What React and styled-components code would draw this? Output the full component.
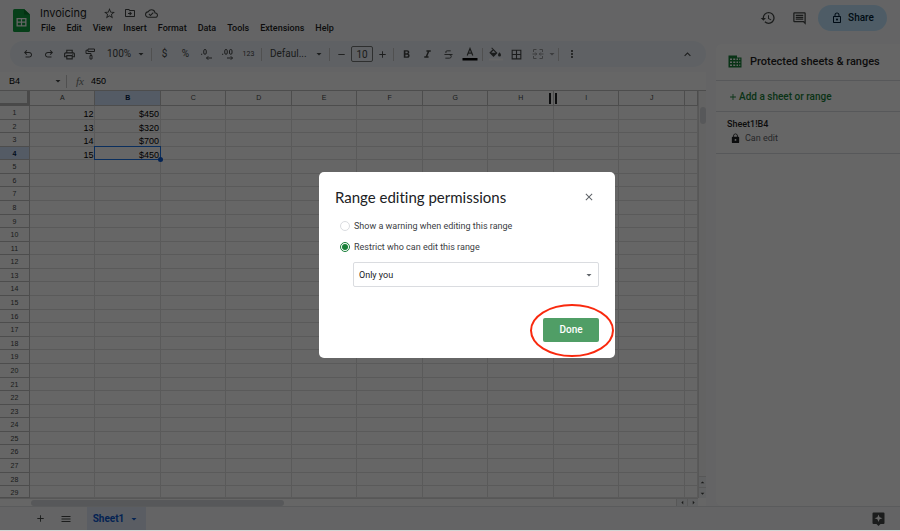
import React from "react";
import styled, { createGlobalStyle, css } from "styled-components";
import {
  MdStarBorder, MdOutlineDriveFileMove, MdOutlineCloudDone, MdOutlinePrint,
  MdFormatBold, MdFormatItalic, MdBorderAll, MdMoreVert, MdKeyboardArrowUp,
  MdHistory, MdOutlineInsertComment, MdOutlineLock, MdLock, MdAdd, MdRemove,
  MdMenu, MdArrowDropDown, MdArrowDropUp, MdArrowLeft, MdArrowRight, MdClose,
} from "react-icons/md";
import { Strikethrough } from "lucide-react";

const SANS = 'Roboto, "Liberation Sans", sans-serif';
const CELL = '"Liberation Sans", Arial, sans-serif';

const GlobalStyle = createGlobalStyle`
  * { box-sizing: border-box; }
  html, body { margin: 0; background: #d4d4d4; }
  body { font-family: ${SANS}; color: #1f1f1f; overflow: hidden; }
  button, input, select { font: inherit; color: inherit; margin: 0; padding: 0; border: 0; background: none; }
  h1, h2, p { margin: 0; }
  svg { display: block; flex: none; }
`;

const Shell = styled.div`
  height: calc(100vh - 1px);
  display: flex;
  flex-direction: column;
  background: #f9fbfd;
`;

/* ---------- Header ---------- */
const Header = styled.header`
  display: flex;
  height: 41px;
  padding: 5px 13px 0 13px;
`;
const Logo = styled.a`
  padding-top: 4px;
  margin-right: 10px;
`;
const Titles = styled.div`
  flex: 1;
`;
const TitleRow = styled.div`
  display: flex;
  align-items: center;
  height: 16px;
  color: #444746;
`;
const DocTitle = styled.h1`
  font: 400 11px/16px Inter, ${SANS};
  color: #1f1f1f;
  margin-right: 12px;
`;
const IconButton = styled.button`
  display: flex;
  align-items: center;
  justify-content: center;
  width: ${(p) => p.$w || 21}px;
  height: ${(p) => p.$h || 16}px;
  color: ${(p) => p.$color || "#444746"};
`;
const Menu = styled.nav`
  display: flex;
  gap: 11px;
  padding-left: 1px;
`;
const MenuItem = styled.button`
  font: 500 9px/15px ${SANS};
  color: #1f1f1f;
`;
const HeaderActions = styled.div`
  display: flex;
  align-items: center;
  height: 26px;
  gap: 11px;
`;
const ShareButton = styled.button`
  display: flex;
  align-items: center;
  justify-content: center;
  gap: 5px;
  width: 69px;
  height: 26px;
  margin-left: -3px;
  border-radius: 13px;
  background: #c2e7ff;
  color: #001d35;
  font: 500 10px/14px ${SANS};
`;

/* ---------- Body ---------- */
const Body = styled.div`
  flex: 1;
  min-height: 0;
  display: flex;
  gap: 10px;
`;
const Main = styled.main`
  flex: 1;
  min-width: 0;
  display: flex;
  flex-direction: column;
`;
const Toolbar = styled.div`
  display: flex;
  align-items: center;
  height: 26px;
  margin: 0 0 5px 10px;
  padding: 0 8px 0 7px;
  border-radius: 13px;
  background: #edf2fa;
  color: #444746;
`;
const ToolText = styled.button`
  display: flex;
  align-items: center;
  justify-content: center;
  width: ${(p) => p.$w || 21}px;
  height: 20px;
  color: #444746;
  font: 400 ${(p) => p.$size || 10}px/16px ${SANS};
`;
const ToolSelect = styled(ToolText)`
  justify-content: space-between;
  padding: 0 2px 0 6px;
`;
const Divider = styled.span`
  width: 1px;
  height: 13px;
  margin: 0 2px;
  background: #c7c7c7;
`;
const SizeInput = styled.input`
  width: 22px;
  height: 16px;
  border: 1px solid #747775;
  border-radius: 2px;
  text-align: center;
  font: 400 10px/14px ${SANS};
`;
const Spacer = styled.span`
  flex: 1;
`;

const FormulaBar = styled.div`
  display: flex;
  align-items: center;
  height: 18px;
  padding-left: 9px;
  background: #fff;
  color: #444746;
  font: 400 9px/14px ${CELL};
`;
const NameBox = styled.input`
  width: 43px;
  color: #000;
`;
const Fx = styled.span`
  width: 20px;
  padding-left: 7px;
  font: italic 400 11px/14px "Liberation Serif", serif;
  color: #747775;
`;
const FormulaInput = styled.input`
  flex: 1;
  min-width: 0;
  color: #000;
  padding-left: 2px;
`;

/* ---------- Sheet ---------- */
const SheetArea = styled.div`
  flex: 1;
  min-height: 0;
  display: grid;
  grid-template-columns: minmax(0, 1fr) 8px;
  grid-template-rows: minmax(0, 1fr) 8px;
  background: #fff;
  border-top: 1px solid #c0c0c0;
`;
const Sheet = styled.table`
  display: grid;
  min-height: 0;
  grid-template-columns: 30px repeat(10, minmax(0, 5fr)) minmax(0, 1fr);
  grid-template-rows: 15px repeat(28, minmax(0, 8fr)) minmax(0, 7fr);
  font: 400 9px/14px ${CELL};
`;
const Part = styled.tbody`
  display: contents;
`;
const Row = styled.tr`
  display: contents;
`;
const headCell = css`
  position: relative;
  display: flex;
  justify-content: center;
  padding: 0;
  min-height: 0;
  border: 0 solid #c0c0c0;
  border-width: 0 1px 1px 0;
  color: ${(p) => (p.$on ? "#041e49" : "#444746")};
  background: ${(p) => (p.$on ? "#d3e3fd" : "#fff")};
  font-size: 7px;
  font-weight: ${(p) => (p.$on ? 700 : 400)};
`;
const Corner = styled.th`
  padding: 0;
  background: #f8f9fa;
  border: 0 solid #b7b7b7;
  border-width: 0 3px 3px 0;
`;
const ColHead = styled.th`
  ${headCell}
`;
const RowHead = styled.th`
  ${headCell}
`;
const Cell = styled.td`
  position: relative;
  z-index: ${(p) => (p.$active ? 1 : 0)};
  display: flex;
  justify-content: flex-end;
  min-height: 0;
  padding: 1px 1px 0 0;
  border: 0 solid #e1e1e1;
  border-width: 0 1px 1px 0;
  color: #000;
`;
const Selection = styled.span`
  position: absolute;
  inset: -1px;
  border: 1px solid #1a73e8;
  &::after {
    content: "";
    position: absolute;
    right: -3px;
    bottom: -3px;
    width: 5px;
    height: 5px;
    border-radius: 50%;
    background: #0b57d0;
  }
`;
const FreezeHandle = styled.span`
  position: absolute;
  z-index: 1;
  right: -4px;
  top: 2px;
  width: 8px;
  height: 11px;
  border: 0 solid #202124;
  border-width: 0 2px;
`;
const VScroll = styled.div`
  display: flex;
  flex-direction: column;
  align-items: center;
  padding-top: 16px;
  border-left: 1px solid #d9d9d9;
  background: #f8f8f8;
`;
const VThumb = styled.div`
  width: 6px;
  height: 17px;
  border-radius: 3px;
  background: #dadce0;
`;
const HScroll = styled.div`
  display: flex;
  align-items: center;
  border-top: 1px solid #d9d9d9;
  padding-left: 31px;
`;
const HThumb = styled.div`
  width: 38%;
  height: 6px;
  border-radius: 3px;
  background: #dadce0;
`;
const ScrollArrow = styled.button`
  display: flex;
  align-items: center;
  justify-content: center;
  width: ${(p) => (p.$flat ? 11 : 7)}px;
  height: ${(p) => (p.$flat ? 7 : 11)}px;
  background: #f1f3f4;
  border: 0 solid #d9d9d9;
  border-width: ${(p) => (p.$flat ? "0 0 0 1px" : "1px 0 0 0")};
  color: #444746;
`;

/* ---------- Side panel ---------- */
const Panel = styled.aside`
  width: 184px;
  margin-top: 3px;
  border-radius: 6px 0 0 6px;
  background: #fff;
`;
const PanelHeader = styled.div`
  display: flex;
  align-items: center;
  gap: 8px;
  height: 37px;
  padding: 0 0 1px 12px;
  border-bottom: 1px solid #dadce0;
`;
const PanelTitle = styled.h2`
  font: 500 11px/16px ${SANS};
  white-space: nowrap;
`;
const AddRange = styled.button`
  display: flex;
  align-items: center;
  gap: 1px;
  width: 100%;
  height: 31px;
  padding: 1px 0 0 12px;
  border-bottom: 1px solid #dadce0;
  color: #188038;
  font: 500 10px/14px ${SANS};
`;
const RangeEntry = styled.div`
  height: 42px;
  padding: 5px 0 0 11px;
  border-bottom: 1px solid #dadce0;
  font: 500 9px/14px ${SANS};
`;
const RangeNote = styled.p`
  display: flex;
  align-items: center;
  gap: 4px;
  padding-left: 3px;
  font-weight: 400;
  color: #5f6368;
  & > svg { color: #202124; }
`;

/* ---------- Tabs ---------- */
const TabBar = styled.footer`
  display: flex;
  align-items: center;
  height: 24px;
  padding: 0 15px 0 27px;
  border-top: 1px solid #e1e3e6;
  color: #444746;
`;
const SheetTab = styled.button`
  display: flex;
  align-items: center;
  justify-content: center;
  gap: 4px;
  width: 59px;
  height: 23px;
  margin-left: 8px;
  background: #e1e9f7;
  color: #0b57d0;
  font: 700 10px/14px ${SANS};
`;

/* ---------- Dialog ---------- */
const Overlay = styled.div`
  position: fixed;
  z-index: 2;
  inset: 0 0 1px 0;
  display: flex;
  align-items: center;
  justify-content: center;
  padding-left: 34px;
  background: rgba(0, 0, 0, 0.6);
`;
const Dialog = styled.section`
  width: 296px;
  padding: 16px;
  border-radius: 5px;
  background: #fff;
`;
const DialogHeader = styled.div`
  display: flex;
  align-items: center;
  justify-content: space-between;
  height: 18px;
  margin-bottom: 12px;
`;
const DialogTitle = styled.h2`
  font: 400 15px/18px Lato, ${SANS};
  font-variant-ligatures: none;
  color: #202124;
`;
const Choice = styled.label`
  display: flex;
  align-items: center;
  gap: 4px;
  height: 16px;
  margin: 0 0 5px 5px;
  font: 400 9px/14px ${SANS};
  color: #3c4043;
`;
const Radio = styled.input`
  appearance: none;
  display: grid;
  place-items: center;
  width: 10px;
  height: 10px;
  border: 1px solid #dadce0;
  border-radius: 50%;
  &:checked { border-color: #188038; }
  &:checked::after {
    content: "";
    width: 6px;
    height: 6px;
    border-radius: 50%;
    background: #188038;
  }
`;
const SelectWrap = styled.div`
  display: grid;
  align-items: center;
  margin: 7px 0 0 18px;
  & > * { grid-area: 1 / 1; }
  & > svg { justify-self: end; margin-right: 4px; color: #5f6368; pointer-events: none; }
`;
const Select = styled.select`
  appearance: none;
  width: 100%;
  height: 25px;
  padding-left: 5px;
  border: 1px solid #dadce0;
  border-radius: 2px;
  font: 400 9px/14px ${SANS};
  color: #202124;
`;
const DialogActions = styled.div`
  display: flex;
  justify-content: flex-end;
  margin-top: 31px;
`;
const DoneWrap = styled.div`
  position: relative;
`;
const DoneButton = styled.button`
  display: block;
  width: 56px;
  height: 24px;
  border-radius: 2px;
  background: #509e66;
  color: #fff;
  font: 500 10px/14px ${SANS};
`;
const Ring = styled.span`
  position: absolute;
  inset: -14px -15px -15px -13px;
  border: 2px solid #f9290e;
  border-radius: 50%;
  pointer-events: none;
`;

/* ---------- Icons ---------- */
const SheetsLogo = () => (
  <svg width="17" height="23" viewBox="0 0 17 23">
    <path d="M1.6 0H11l6 5.6v15.8q0 1.6-1.6 1.6H1.6Q0 23 0 21.400V1.600Q0 0 1.600 0z" fill="#0f9d3f" />
    <path d="M11 0l6 5.600h-6z" fill="#087a2c" />
    <path d="M3.500 9h10v8.500h-10z M4.800 10.200v2.400h3.100v-2.400z M9.100 10.200v2.400h3.100v-2.400z M4.800 13.800v2.400h3.100v-2.400z M9.100 13.800v2.400h3.100v-2.400z" fill="#fff" fillRule="evenodd" />
  </svg>
);
const UNDO = "M280-200v-80h284q63 0 109.500-40T720-420q0-60-46.500-100T564-560H312l104 104-56 56-200-200 200-200 56 56-104 104h252q97 0 166.500 63T800-420q0 94-69.500 157T564-200H280Z";
const UndoIcon = ({ flip }) => (
  <svg width="12" height="12" viewBox="0 -960 960 960" fill="currentColor">
    <path d={UNDO} transform={flip ? "translate(960 0) scale(-1 1)" : undefined} />
  </svg>
);
const PaintIcon = () => (
  <svg width="11" height="12" viewBox="0 0 22 24" fill="none" stroke="currentColor" strokeWidth="2">
    <path d="M6 2h13v5H6z M6 4.500H2v6.500h10v4" />
    <path d="M10 15h4v7h-4z" />
  </svg>
);
const DecimalIcon = ({ more }) => (
  <svg width="13" height="13" viewBox="0 0 26 26" fill="none" stroke="currentColor" strokeWidth="2">
    <path d="M2 12.500h2.400" strokeWidth="2.400" />
    <rect x="7.500" y="3" width="5" height="9.500" rx="2.500" />
    {more && <rect x="17" y="3" width="5" height="9.500" rx="2.500" />}
    {more ? <path d="M12 20h11 M19.500 16.500l3.500 3.500-3.500 3.500" /> : <path d="M24 20H13 M16.500 16.500L13 20l3.500 3.500" />}
  </svg>
);
const TextColorIcon = () => (
  <svg width="16" height="14" viewBox="0 0 16 14" fill="none">
    <path d="M5.200 8.500L8 1.500l2.800 7 M6.100 6.200h3.800" stroke="currentColor" strokeWidth="1.200" />
    <path d="M.5 11h15v2.500H.5z" fill="#000" />
  </svg>
);
const FillIcon = () => (
  <svg width="16" height="14" viewBox="0 0 16 14">
    <path d="M4 0.500l5.500 5.500-4 4-4.200-4.200 3.500-3.500L3.200 1.300z M5.400 3.600L3.300 5.700h4.300z" fill="currentColor" fillRule="evenodd" />
    <path d="M11.500 5.300q1.500 1.800 1.500 2.700a1.500 1.500 0 0 1-3 0q0-.9 1.500-2.700z" fill="currentColor" />
    <path d="M1 11.500h14v2H1z" fill="#fff" />
  </svg>
);
const MergeIcon = () => (
  <svg width="12" height="12" viewBox="0 0 24 24" fill="none" stroke="#96999b" strokeWidth="2">
    <path d="M9 3H3v5 M15 3h6v5 M9 21H3v-5 M15 21h6v-5 M1 12h8 M23 12h-8 M6.500 9l3 3-3 3 M17.500 9l-3 3 3 3" />
  </svg>
);
const TableIcon = () => (
  <svg width="14" height="13" viewBox="0 0 28 26">
    <path d="M1 1h17v4h9v20H1z" fill="#188038" />
    <path d="M4 7h4v3H4z M10.500 7h4v3h-4z M17 7h3v3h-3z M4 13h4v3H4z M10.500 13h4v3h-4z M17 13h3v3h-3z M22.500 13h2v3h-2z M4 19h4v3H4z M10.500 19h4v3h-4z M17 19h3v3h-3z M22.500 19h2v3h-2z M22.500 7h2v3h-2z" fill="#fff" />
  </svg>
);
const ExploreIcon = () => (
  <svg width="13" height="14" viewBox="0 0 26 28">
    <path d="M3 1h20q2 0 2 2v19q0 2-2 2h-6l-4 4-4-4H3q-2 0-2-2V3q0-2 2-2z" fill="#444746" />
    <path d="M13 5l2.200 5.300L21 12.500l-5.800 2.200L13 20l-2.200-5.300L5 12.500l5.800-2.200z" fill="#fff" />
  </svg>
);

const MENUS = ["File", "Edit", "View", "Insert", "Format", "Data", "Tools", "Extensions", "Help"];
const COLUMNS = ["A", "B", "C", "D", "E", "F", "G", "H", "I", "J", ""];
const DATA = { 1: ["12", "$450"], 2: ["13", "$320"], 3: ["14", "$700"], 4: ["15", "$450"] };
const ROWS = Array.from({ length: 29 }, (_, i) => i + 1);

const Tool = ({ label, children, ...rest }) => (
  <IconButton aria-label={label} $h={20} {...rest}>{children}</IconButton>
);

export default function App() {
  return (
    <>
      <GlobalStyle />
      <Shell>
        <Header>
          <Logo href="#" aria-label="Sheets home"><SheetsLogo /></Logo>
          <Titles>
            <TitleRow>
              <DocTitle>Invoicing</DocTitle>
              <IconButton aria-label="Star"><MdStarBorder size={13} /></IconButton>
              <IconButton aria-label="Move"><MdOutlineDriveFileMove size={12} /></IconButton>
              <IconButton aria-label="Saved status"><MdOutlineCloudDone size={13} /></IconButton>
            </TitleRow>
            <Menu>{MENUS.map((m) => <MenuItem key={m}>{m}</MenuItem>)}</Menu>
          </Titles>
          <HeaderActions>
            <IconButton aria-label="Version history"><MdHistory size={16} /></IconButton>
            <IconButton aria-label="Comments"><MdOutlineInsertComment size={15} /></IconButton>
            <ShareButton><MdOutlineLock size={12} />Share</ShareButton>
          </HeaderActions>
        </Header>

        <Body>
          <Main>
            <Toolbar role="toolbar" aria-label="Formatting">
              <Tool label="Undo"><UndoIcon /></Tool>
              <Tool label="Redo"><UndoIcon flip /></Tool>
              <Tool label="Print"><MdOutlinePrint size={13} /></Tool>
              <Tool label="Paint format"><PaintIcon /></Tool>
              <ToolSelect $w={48}>100%<MdArrowDropDown size={12} /></ToolSelect>
              <Divider />
              <ToolText>$</ToolText>
              <ToolText>%</ToolText>
              <Tool label="Decrease decimal places"><DecimalIcon /></Tool>
              <Tool label="Increase decimal places"><DecimalIcon more /></Tool>
              <ToolText $size={7}>123</ToolText>
              <Divider />
              <ToolSelect $w={63}>Defaul...<MdArrowDropDown size={12} /></ToolSelect>
              <Divider />
              <Tool label="Decrease font size" $w={19}><MdRemove size={11} /></Tool>
              <SizeInput aria-label="Font size" defaultValue="10" />
              <Tool label="Increase font size" $w={18}><MdAdd size={11} /></Tool>
              <Divider />
              <Tool label="Bold"><MdFormatBold size={13} /></Tool>
              <Tool label="Italic"><MdFormatItalic size={13} /></Tool>
              <Tool label="Strikethrough"><Strikethrough size={11} /></Tool>
              <Tool label="Text color"><TextColorIcon /></Tool>
              <Divider />
              <Tool label="Fill color"><FillIcon /></Tool>
              <Tool label="Borders"><MdBorderAll size={13} /></Tool>
              <Tool label="Merge cells"><MergeIcon /></Tool>
              <Tool label="Merge options" $w={8} $color="#96999b"><MdArrowDropDown size={12} /></Tool>
              <Divider />
              <Tool label="More"><MdMoreVert size={12} /></Tool>
              <Spacer />
              <Tool label="Hide the menus"><MdKeyboardArrowUp size={13} /></Tool>
            </Toolbar>

            <FormulaBar>
              <NameBox aria-label="Name box" defaultValue="B4" />
              <MdArrowDropDown size={12} />
              <Divider />
              <Fx>fx</Fx>
              <FormulaInput aria-label="Formula" defaultValue="450" />
            </FormulaBar>

            <SheetArea>
              <Sheet>
                <Part as="thead">
                  <Row>
                    <Corner />
                    {COLUMNS.map((c) => (
                      <ColHead key={c} scope="col" $on={c === "B"}>
                        {c}
                        {c === "H" && <FreezeHandle />}
                      </ColHead>
                    ))}
                  </Row>
                </Part>
                <Part>
                  {ROWS.map((r) => (
                    <Row key={r}>
                      <RowHead scope="row" $on={r === 4}>{r}</RowHead>
                      {COLUMNS.map((c, i) => (
                        <Cell key={c} $active={r === 4 && c === "B"}>
                          {DATA[r]?.[i]}
                          {r === 4 && c === "B" && <Selection />}
                        </Cell>
                      ))}
                    </Row>
                  ))}
                </Part>
              </Sheet>
              <VScroll>
                <VThumb />
                <Spacer />
                <ScrollArrow aria-label="Scroll up"><MdArrowDropUp size={9} /></ScrollArrow>
                <ScrollArrow aria-label="Scroll down"><MdArrowDropDown size={9} /></ScrollArrow>
              </VScroll>
              <HScroll>
                <HThumb />
                <Spacer />
                <ScrollArrow $flat aria-label="Scroll left"><MdArrowLeft size={9} /></ScrollArrow>
                <ScrollArrow $flat aria-label="Scroll right"><MdArrowRight size={9} /></ScrollArrow>
              </HScroll>
            </SheetArea>
          </Main>

          <Panel>
            <PanelHeader>
              <TableIcon />
              <PanelTitle>Protected sheets &amp; ranges</PanelTitle>
            </PanelHeader>
            <AddRange><MdAdd size={10} />Add a sheet or range</AddRange>
            <RangeEntry>
              Sheet1!B4
              <RangeNote><MdLock size={11} />Can edit</RangeNote>
            </RangeEntry>
          </Panel>
        </Body>

        <TabBar>
          <IconButton aria-label="Add sheet" $w={26}><MdAdd size={11} /></IconButton>
          <IconButton aria-label="All sheets" $w={26}><MdMenu size={12} /></IconButton>
          <SheetTab>Sheet1<MdArrowDropDown size={12} /></SheetTab>
          <Spacer />
          <IconButton aria-label="Explore" $w={14}><ExploreIcon /></IconButton>
        </TabBar>
      </Shell>

      <Overlay>
        <Dialog role="dialog" aria-modal="true" aria-labelledby="dialog-title">
          <DialogHeader>
            <DialogTitle id="dialog-title">Range editing permissions</DialogTitle>
            <IconButton aria-label="Close" $color="#5f6368"><MdClose size={12} /></IconButton>
          </DialogHeader>
          <Choice><Radio type="radio" name="mode" value="warn" />Show a warning when editing this range</Choice>
          <Choice><Radio type="radio" name="mode" value="restrict" defaultChecked />Restrict who can edit this range</Choice>
          <SelectWrap>
            <Select aria-label="Who can edit"><option>Only you</option></Select>
            <MdArrowDropDown size={12} />
          </SelectWrap>
          <DialogActions>
            <DoneWrap>
              <DoneButton>Done</DoneButton>
              <Ring />
            </DoneWrap>
          </DialogActions>
        </Dialog>
      </Overlay>
    </>
  );
}
